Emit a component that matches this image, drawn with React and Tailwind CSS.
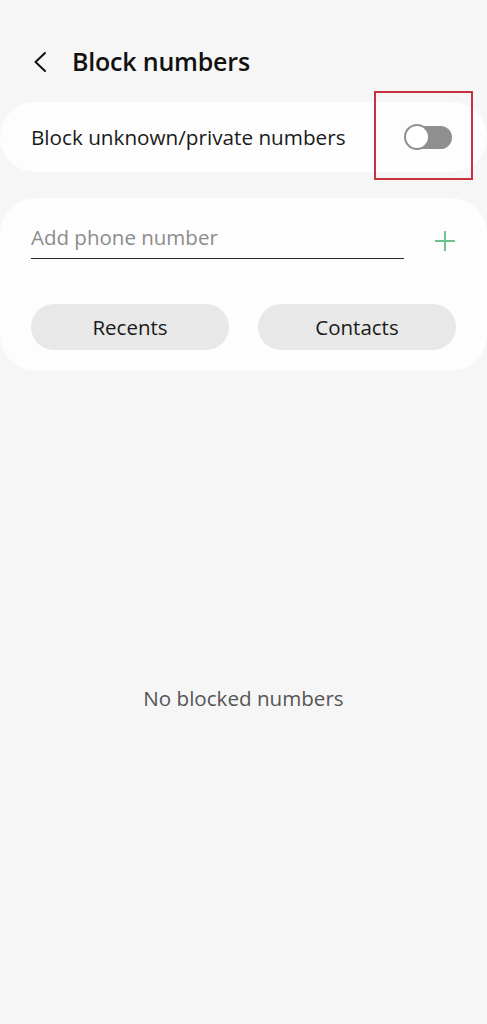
export default function App() {
  return (
    <div className="min-h-[1024px] w-[487px] bg-[#f6f6f6] flex flex-col" style={{ fontFamily: '"Open Sans", "Noto Sans", sans-serif' }}>
      <div className="flex items-center h-[62px] mt-[31px] pl-[31px]">
        <svg width="16" height="22" viewBox="0 0 16 22" className="ml-[1px]">
          <path d="M13 2 L3.5 11 L13 20" fill="none" stroke="#111" strokeWidth="2" strokeLinecap="round" strokeLinejoin="round" />
        </svg>
        <span className="ml-[24px] text-[25px] font-semibold text-[#111] tracking-[-0.2px]">Block numbers</span>
      </div>

      <div className="relative mt-[9px] h-[70px] bg-[#fdfdfd] rounded-[36px] flex items-center justify-between pl-[31px] pr-[35px]">
        <span className="text-[20.7px] text-[#1a1a1a] mt-[1px]">Block unknown/private numbers</span>
        <div className="relative w-[48px] h-[26px] flex items-center">
          <div className="absolute right-0 w-[44px] h-[23px] rounded-full bg-[#8f8f8f]" />
          <div className="absolute left-0 w-[26px] h-[26px] rounded-full bg-white border-[2px] border-[#8f8f8f]" />
        </div>
        <div className="absolute left-[374px] top-[-11px] w-[99px] h-[89px] border-2 border-[#c7323e]" />
      </div>

      <div className="mt-[26px] bg-[#fdfdfd] rounded-[36px] pl-[31px] pr-[31px] pt-[21px] pb-[20px]">
        <div className="flex items-center">
          <div className="w-[375px] h-[40px] border-b-[1.5px] border-[#2a2a2a] flex items-center">
            <span className="text-[20.5px] text-[#8c8c8c] -mt-[3px]">Add phone number</span>
          </div>
          <svg width="22" height="22" viewBox="0 0 22 22" className="ml-[30px] mt-[4px]">
            <path d="M11 1 V21 M1 11 H21" stroke="#6cc28f" strokeWidth="2" />
          </svg>
        </div>
        <div className="flex justify-between mt-[45px] mb-[1px]">
          <div className="w-[198px] h-[46px] rounded-full bg-[#e8e8e8] flex items-center justify-center text-[20.5px] font-medium text-[#1a1a1a]">Recents</div>
          <div className="w-[198px] h-[46px] rounded-full bg-[#e8e8e8] flex items-center justify-center text-[20.5px] font-medium text-[#1a1a1a]">Contacts</div>
        </div>
      </div>

      <div className="mt-[312px] text-center text-[20.6px] text-[#555]">No blocked numbers</div>
    </div>
  );
}
